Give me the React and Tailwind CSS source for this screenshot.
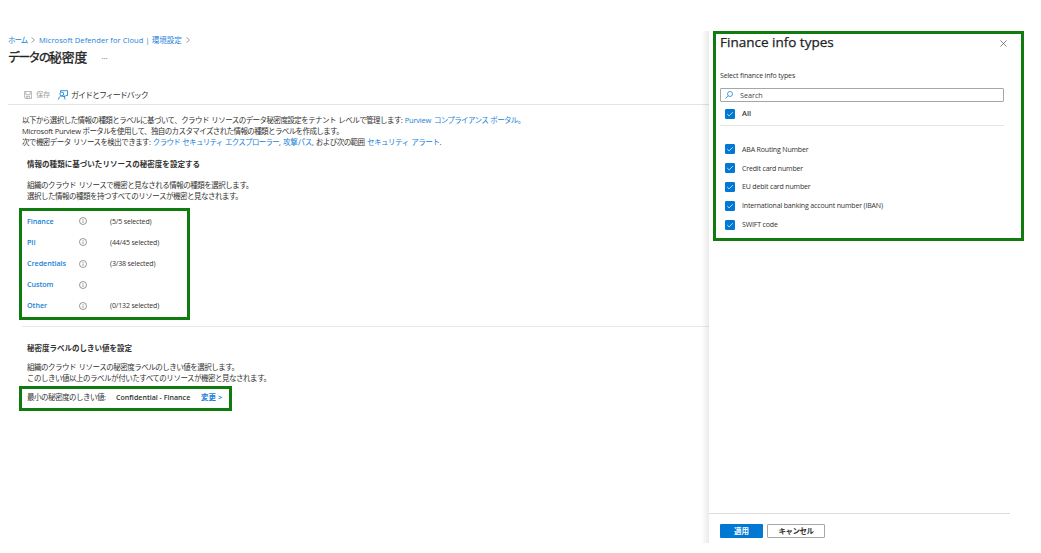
import React, { useState } from "react";

const infoTypes = [
	{ name: "Finance", selected: "(5/5 selected)" },
	{ name: "PII", selected: "(44/45 selected)" },
	{ name: "Credentials", selected: "(3/38 selected)" },
	{ name: "Custom", selected: "" },
	{ name: "Other", selected: "(0/132 selected)" },
];

const financeTypes = [
	"ABA Routing Number",
	"Credit card number",
	"EU debit card number",
	"International banking account number (IBAN)",
	"SWIFT code",
];

const Link = ({ className = "", children }) => (
	<a href="#" className={`text-[#1a80d8] ${className}`}>
		{children}
	</a>
);

const Chevron = () => (
	<svg viewBox="0 0 4 6" className="w-1 h-1.5 shrink-0" fill="none" stroke="#777" strokeWidth="0.7">
		<path d="M.5.5 3.5 3 .5 5.5" />
	</svg>
);

const InfoIcon = () => (
	<svg viewBox="0 0 8 8" className="w-2 h-2" fill="none" stroke="#555" strokeWidth="0.6">
		<circle cx="4" cy="4" r="3.5" />
		<path d="M4 3.5v2.4M4 2v.8" />
	</svg>
);

const Checkbox = ({ label, checked, onChange, className = "" }) => (
	<label className={`flex items-center ${className}`}>
		<input type="checkbox" className="sr-only" checked={checked} onChange={onChange} />
		<span
			className={`w-2.5 h-2.5 shrink-0 rounded-[1px] border border-[#0078d4] flex items-center justify-center ${
				checked ? "bg-[#0078d4]" : "bg-white"
			}`}>
			<svg viewBox="0 0 8 8" className="w-2 h-2 shrink-0" fill="none" stroke="white" strokeWidth="0.7">
				<path d="m1.2 4 1.9 1.9L6.8 2.2" />
			</svg>
		</span>
		<span className="ml-[7px]">{label}</span>
	</label>
);

const Toolbar = () => (
	<div className="ml-2 h-[19px] pl-4 flex items-center border-b border-[#e3e3e3] leading-none">
		<svg viewBox="0 0 9 9" className="w-2 h-2" fill="none" stroke="#a19f9d" strokeWidth="0.8">
			<path d="M.5.5h8v8h-7l-1-1zM2 .5v3.6h5V.5M2.5 8.5V6h4v2.5M3.8 6.5v2" />
		</svg>
		<span className="ml-1 w-[14px] text-[7.2px] tracking-[-0.2px] text-[#a19f9d]">保存</span>
		<svg viewBox="0 0 10 10" className="ml-2 -mt-px w-[10px] h-[10px]" fill="none" stroke="#0078d4" strokeWidth="0.8">
			<path d="M2.5 2V.7h7v4.8H8L6.4 7V5.5" />
			<circle cx="3.8" cy="4" r="1.9" />
			<path d="M.5 9.5C.7 7.2 2 6 3.8 6S6.9 7.2 7.1 9.5" />
		</svg>
		<span className="ml-[3px] text-[8px] tracking-[-1px]">ガイドとフィードバック</span>
	</div>
);

const Sensitivity = () => (
	<main className="w-[709px] shrink-0 pt-[34px]">
		<nav className="ml-2 h-3 flex items-center text-[7.5px] leading-3">
			<Link className="tracking-[-1px] w-[19px]">ホーム</Link>
			<span className="ml-[4px] mr-[4px] flex">
				<Chevron />
			</span>
			<Link>
				<span className="tracking-[0.08px]">Microsoft Defender for Cloud | </span>環境設定
			</Link>
			<span className="ml-[4px] flex">
				<Chevron />
			</span>
		</nav>
		<div className="ml-2 h-[22px] flex items-center">
			<h1 className="text-[12.8px] leading-[22px] text-[#222] [-webkit-text-stroke:0.3px]">
				<span className="text-[12px] tracking-[-1.75px]">データの</span>秘密度
			</h1>
			<span className="ml-[14px] -mt-[2px] text-[8px] leading-[22px] text-[#666]">…</span>
		</div>
		<div className="h-[18px]" />
		<Toolbar />

		<div className="ml-[22px] pt-[10.4px] leading-[10.7px] tracking-[-0.555px] [word-spacing:1px]">
			<p>
				以下から選択した情報の種類とラベルに基づいて、クラウド リソースのデータ秘密度設定をテナント レベルで管理します:{" "}
				<Link>
					<span className="tracking-[-0.2px]">Purview </span>
					<span className="tracking-[-0.65px]">コンプライアンス ポータル。</span>
				</Link>
			</p>
			<p className="[word-spacing:0px]">
				<span className="tracking-[-0.24px]">Microsoft Purview </span>
				<span className="tracking-[-0.6px]">ポータルを使用して、独自のカスタマイズされた情報の種類とラベルを作成します。</span>
			</p>
			<p>
				次で機密データ リソースを検出できます:{" "}
				<Link className="tracking-[-0.7px]">クラウド セキュリティ エクスプローラー</Link>,{" "}
				<Link className="tracking-[-0.2px]">攻撃パス</Link>, および次の範囲{" "}
				<Link className="tracking-[-0.45px]">セキュリティ アラート</Link>.
			</p>
		</div>

		<section className="ml-[27px] pt-[11px] leading-[10.7px]">
			<h2 className="text-[7.5px] font-bold tracking-[0.04px]">情報の種類に基づいたリソースの秘密度を設定する</h2>
			<div className="pt-[11px] [word-spacing:1px]">
				<p className="tracking-[-0.49px]">組織のクラウド リソースで機密と見なされる情報の種類を選択します。</p>
				<p className="tracking-[-0.49px]">選択した情報の種類を持つすべてのリソースが機密と見なされます。</p>
			</div>
		</section>

		<ul className="ml-[19px] mt-[6.6px] w-[171px] h-[112px] border-3 border-[#107c10] pl-[5px] flex flex-col text-[7px] tracking-[-0.15px]">
			{infoTypes.map((type) => (
				<li key={type.name} className="h-[21.3px] pb-[1.4px] flex items-center">
					<Link className="w-[52px] text-[7.2px] tracking-[-0.05px] font-semibold">{type.name}</Link>
					<InfoIcon />
					<span className="ml-[23px]">{type.selected}</span>
				</li>
			))}
		</ul>

		<section className="ml-[22px] mt-[6px] border-t border-[#e8e8e8] pl-[5px] pt-4 leading-[10.7px]">
			<h2 className="text-[7.5px] font-bold">秘密度ラベルのしきい値を設定</h2>
			<div className="pt-[8px] [word-spacing:1px] tracking-[-0.49px]">
				<p>組織のクラウド リソースの秘密度ラベルのしきい値を選択します。</p>
				<p>このしきい値以上のラベルが付いたすべてのリソースが機密と見なされます。</p>
			</div>
		</section>
		<div className="ml-[19px] mt-[3px] w-[213px] h-[25px] border-3 border-[#107c10] pl-[5px] pb-[3px] flex items-center">
			<span className="w-[89px] tracking-[-0.5px]">最小の秘密度のしきい値:</span>
			<span className="w-[85px] text-[7.1px] font-semibold">Confidential - Finance</span>
			<Link className="font-bold">変更 &gt;</Link>
		</div>
	</main>
);

const FinancePanel = () => {
	const [checked, setChecked] = useState(financeTypes);
	const allChecked = checked.length === financeTypes.length;

	const toggle = (name) => {
		setChecked((prev) => (prev.includes(name) ? prev.filter((n) => n !== name) : [...prev, name]));
	};

	return (
		<aside className="relative w-[332px] h-[543px] flex flex-col bg-white">
			{/* soft edge over the page content */}
			<div className="absolute right-full top-[31px] bottom-0 w-2 bg-gradient-to-l from-black/8 to-transparent"></div>
			<div className="mt-[31px] ml-1 w-[311px] h-[210px] border-3 border-[#107c10] pl-1 pr-[18px]">
				<div className="h-[18px] flex items-center justify-between">
					<h2 className="text-[13.5px] leading-none text-[#222] [-webkit-text-stroke:0.25px]">
						Finance info types
					</h2>
					<svg viewBox="0 0 8 8" className="w-[7px] h-[7px] -mr-1" fill="none" stroke="#555" strokeWidth="0.8">
						<path d="m.5.5 7 7m0-7-7 7" />
					</svg>
				</div>
				<p className="mt-[18px] h-[11px] leading-[11px] text-[7px] tracking-[-0.15px]">Select finance info types</p>
				<div className="mt-[7px] h-[14px] w-[284px] border border-[#a6a6a6] rounded-[1px] flex items-center pl-1">
					<svg viewBox="0 0 8 8" className="w-2 h-2" fill="none" stroke="#0078d4" strokeWidth="0.7">
						<circle cx="5" cy="3" r="2.5" />
						<path d="M3.2 4.8.5 7.5" />
					</svg>
					<input className="ml-[7px] flex-1 text-[7.2px] outline-none placeholder:text-[#444]" placeholder="Search" />
				</div>
				<div className="h-[24px] w-[284px] border-b border-[#e5e5e5] pl-[5px] pt-[7px] text-[7.4px] font-semibold">
					<Checkbox
						label="All"
						checked={allChecked}
						onChange={() => setChecked(allChecked ? [] : financeTypes)}
					/>
				</div>
				<div className="pl-[5px] pt-[14px] text-[7px] tracking-[-0.16px]">
					{financeTypes.map((name) => (
						<Checkbox
							key={name}
							label={name}
							className="h-[18.8px]"
							checked={checked.includes(name)}
							onChange={() => toggle(name)}
						/>
					))}
				</div>
			</div>
			<div className="mt-auto w-[301px] h-[30px] border-t border-[#ddd] pl-[11px] pt-[10px] flex gap-1 text-[7.5px] font-bold">
				<button className="w-[43px] h-[14px] rounded-[1px] bg-[#0078d4] text-white leading-[14px]">適用</button>
				<button className="w-[58px] h-[14px] rounded-[1px] border border-[#a6a6a6] leading-3 tracking-[-0.5px]">キャンセル</button>
			</div>
		</aside>
	);
};

const App = () => {
	return (
		<div className="w-[1041px] h-[553px] overflow-hidden bg-white flex whitespace-nowrap text-[7.5px] leading-none text-[#323130] font-['Open_Sans','Noto_Sans_CJK_JP',sans-serif]">
			<Sensitivity />
			<FinancePanel />
		</div>
	);
};

export default App;
